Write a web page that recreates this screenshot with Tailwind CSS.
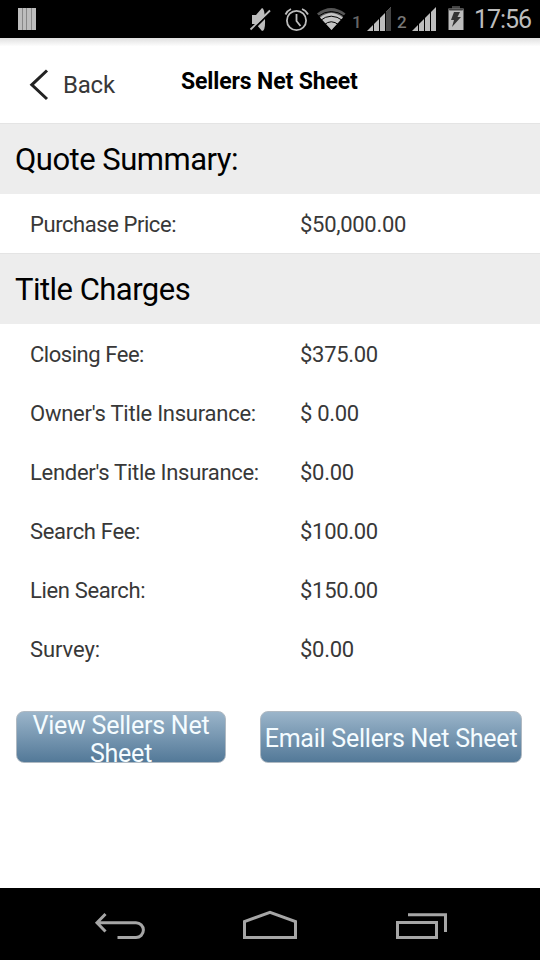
<!DOCTYPE html>
<html lang="en">
<head>
<meta charset="utf-8">
<title>Sellers Net Sheet</title>
<script src="https://cdn.jsdelivr.net/npm/@tailwindcss/browser@4"></script>
</head>
<body class="flex h-[960px] w-[540px] flex-col overflow-hidden bg-white font-['Roboto',sans-serif] text-[#383838]">
<div class="flex h-[38px] shrink-0 items-start bg-black">
  <svg class="h-[38px] w-[540px]" viewBox="0 0 540 38">
    <path fill="#bdbdbd" d="M18 8h18v22H18z"/>
    <path stroke="#888" d="M22.5 8v22M26.5 8v22M31.5 8v22"/>
    <path fill="#bdbdbd" d="M252 15h4l6-7q2.500 0 3 11.500t-3 11.500l-6-7h-4z"/>
    <path stroke="#000" stroke-width="2" d="M251 31.500L270 12.500"/>
    <path stroke="#bdbdbd" stroke-width="1.800" d="M250.500 29.500L270 10.500"/>
    <g fill="none" stroke="#bdbdbd" stroke-width="1.800"><circle cx="296.500" cy="20.500" r="9.600"/><path d="M296.500 14v7l4 5M285.500 14.500q2-4 5.500-5.500M302 9q4 1.500 6 5.500"/></g>
    <path fill="#555" d="M317 13.500Q331 2.500 345.500 13.500L331.500 30z"/>
    <path fill="#c4c4c4" d="M320 17.500Q331 8.500 343 17.500L331.500 30z"/>
    <path fill="none" stroke="#000" stroke-width="1" d="M318 16.500Q331 6.500 345 16.500M320 20.700Q331 11.700 343 20.700M324 25Q331 18.500 339 25"/>
    <g fill="#bdbdbd"><path d="M367 31L391 7v24z"/><path d="M412 31L436 7v24z"/></g>
    <path fill="#444" d="M385.500 12.500L391 7v24h-5.500z"/>
    <path stroke="#000" d="M373.500 20v12M379.500 15v17M385.500 10v22M418.500 20v12M424.500 15v17M430.500 10v22"/>
    <path fill="#444" d="M452 6h8v3h-8z"/>
    <path fill="#bdbdbd" d="M448.500 8.500h15V30h-15z"/><path fill="#444" d="M448.500 8.500h15l-1 2h-13z"/>
    <path fill="#333" d="M454 12h6l-2.500 5h3.500l-9 10 2-7h-3z"/>
    <g font-family="Roboto"><text x="352" y="28" font-size="17" font-weight="500" fill="#666">1</text><text x="397" y="28" font-size="17" font-weight="500" fill="#777">2</text><text x="474" y="28" font-size="25" fill="#bdbdbd" textLength="58">17:56</text></g>
  </svg>
</div>
<header class="grid h-[85px] shrink-0 grid-cols-[63px_118px_1fr] bg-linear-to-b from-[#e0e0e0] via-white via-10% to-white">
  <svg class="h-[85px] w-[63px]" viewBox="0 38 63 85"><path fill="none" stroke="#222" stroke-width="3" d="M47 70.500L31.800 84.800L47 99"/></svg>
  <span class="pt-[33px] text-[24px] leading-[28px] tracking-[-0.2px]">Back</span>
  <h1 class="pt-[30px] text-[23px] leading-[28px] font-bold tracking-[-0.13px] text-black">Sellers Net Sheet</h1>
</header>
<main class="flex grow flex-col">
  <h2 class="h-[71px] border-t border-[#e4e4e4] bg-[#ededed] pl-[15px] text-[31px] leading-[72px] tracking-[-0.5px] text-black">Quote Summary:</h2>
  <dl class="grid auto-rows-[59px] grid-cols-[270px_1fr] pl-[30px] text-[22px] leading-[62px]">
    <dt class="tracking-[-0.43px]">Purchase Price:</dt><dd class="tracking-[-0.3px]">$50,000.00</dd>
  </dl>
  <h2 class="h-[71px] border-t border-[#e4e4e4] bg-[#ededed] pl-[15px] text-[31px] leading-[72px] tracking-[-0.53px] text-black">Title Charges</h2>
  <dl class="grid auto-rows-[59px] grid-cols-[270px_1fr] pl-[30px] text-[22px] leading-[62px]">
    <dt class="tracking-[-0.46px]">Closing Fee:</dt><dd class="tracking-[-0.3px]">$375.00</dd>
    <dt class="tracking-[-0.25px]">Owner's Title Insurance:</dt><dd class="tracking-[-0.3px]">$ 0.00</dd>
    <dt class="tracking-[-0.29px]">Lender's Title Insurance:</dt><dd class="tracking-[-0.3px]">$0.00</dd>
    <dt class="tracking-[-0.32px]">Search Fee:</dt><dd class="tracking-[-0.3px]">$100.00</dd>
    <dt class="tracking-[-0.35px]">Lien Search:</dt><dd class="tracking-[-0.3px]">$150.00</dd>
    <dt class="tracking-[-0.1px]">Survey:</dt><dd class="tracking-[-0.3px]">$0.00</dd>
  </dl>
  <div class="mt-[33px] flex gap-[34px] pl-4 text-[25px] leading-[28px] tracking-[-0.23px] text-[#f5fcff]">
    <button class="flex h-[52px] w-[210px] items-center justify-center rounded-[8px] border border-[#afb9c2] bg-linear-to-b from-[#9bb5ca] to-[#537998] pt-[5px]"><span>View Sellers Net<br>Sheet</span></button>
    <button class="flex h-[52px] w-[262px] items-center justify-center rounded-[8px] border border-[#afb9c2] bg-linear-to-b from-[#9bb5ca] to-[#537998] pt-[4px] whitespace-nowrap">Email Sellers Net Sheet</button>
  </div>
</main>
<nav class="h-[72px] shrink-0 bg-black">
  <svg class="h-[72px] w-[540px]" viewBox="0 888 540 72" fill="none" stroke="#a6a6a6" stroke-width="3"><path d="M105.500 914L97 922.700L105.500 931.500M97 922.700H136a7.400 7.400 0 0 1 0 14.800H117.500"/><path d="M244.500 937.500V921.500L270 912.300L295.500 921.500V937.500z"/><path d="M397.500 922.500h39v15h-39zM408 914.800h37.500V932"/></svg>
</nav>
</body>
</html>
